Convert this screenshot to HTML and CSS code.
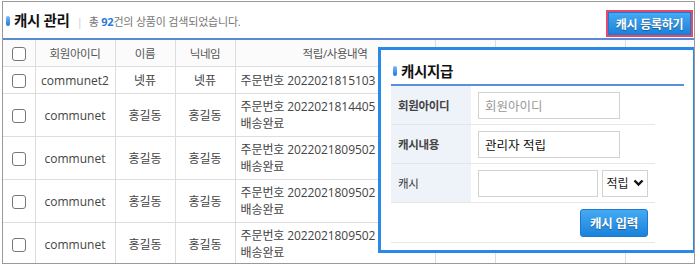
FILE: index.html
```html
<!DOCTYPE html>
<html lang="ko">
<head>
    <meta charset="UTF-8">
    <title>캐시 관리</title>
    <link rel="stylesheet" href="styles.css">
</head>
<body>
    <div class="frame">
        <!-- 상단 타이틀 -->
        <div class="head">
            <div class="head-title">
                <span class="pill"></span>
                <h2>캐시 관리</h2>
                <span class="bar">|</span>
                <span class="count">총 <b>92</b>건의 상품이 검색되었습니다.</span>
            </div>
            <div class="btn-wrap">
                <button class="btn-blue">캐시 등록하기</button>
            </div>
        </div>

        <!-- 목록 -->
        <table class="list">
            <colgroup>
                <col style="width:32px">
                <col style="width:80px">
                <col style="width:60px">
                <col style="width:60px">
                <col style="width:200px">
                <col style="width:60px">
                <col style="width:130px">
                <col>
            </colgroup>
            <thead>
                <tr>
                    <th><span class="chk"></span></th>
                    <th>회원아이디</th>
                    <th>이름</th>
                    <th>닉네임</th>
                    <th>적립/사용내역</th>
                    <th>캐시</th>
                    <th>일시</th>
                    <th>관리</th>
                </tr>
            </thead>
            <tbody>
                <tr class="short">
                    <td><span class="chk"></span></td>
                    <td>communet2</td>
                    <td>넷퓨</td>
                    <td>넷퓨</td>
                    <td class="memo">주문번호 2022021815103</td>
                    <td>1,000</td>
                    <td>2022-02-18</td>
                    <td class="last">0</td>
                </tr>
                <tr>
                    <td><span class="chk"></span></td>
                    <td>communet</td>
                    <td>홍길동</td>
                    <td>홍길동</td>
                    <td class="memo">주문번호 2022021814405<br>배송완료</td>
                    <td></td><td></td><td></td>
                </tr>
                <tr>
                    <td><span class="chk"></span></td>
                    <td>communet</td>
                    <td>홍길동</td>
                    <td>홍길동</td>
                    <td class="memo">주문번호 2022021809502<br>배송완료</td>
                    <td></td><td></td><td></td>
                </tr>
                <tr>
                    <td><span class="chk"></span></td>
                    <td>communet</td>
                    <td>홍길동</td>
                    <td>홍길동</td>
                    <td class="memo">주문번호 2022021809502<br>배송완료</td>
                    <td></td><td></td><td></td>
                </tr>
                <tr>
                    <td><span class="chk"></span></td>
                    <td>communet</td>
                    <td>홍길동</td>
                    <td>홍길동</td>
                    <td class="memo">주문번호 2022021809502<br>배송완료</td>
                    <td></td><td></td><td></td>
                </tr>
            </tbody>
        </table>

        <!-- 캐시지급 팝업 -->
        <div class="modal">
            <div class="modal-title">
                <span class="pill"></span>
                <h3>캐시지급</h3>
            </div>
            <table class="form">
                <tr>
                    <th>회원아이디</th>
                    <td><input type="text" class="inp" placeholder="회원아이디"></td>
                </tr>
                <tr>
                    <th>캐시내용</th>
                    <td><input type="text" class="inp" value="관리자 적립"></td>
                </tr>
                <tr>
                    <th class="light">캐시</th>
                    <td>
                        <div class="cash-row">
                            <input type="text" class="inp inp-short">
                            <div class="sel">적립
                                <svg width="11" height="8" viewBox="0 0 11 8"><path d="M1.5 1.5 L5.5 5.5 L9.5 1.5" fill="none" stroke="#111" stroke-width="2.4"/></svg>
                            </div>
                        </div>
                    </td>
                </tr>
                <tr class="act">
                    <td colspan="2"><button class="btn-blue btn-submit">캐시 입력</button></td>
                </tr>
            </table>
        </div>
    </div>
</body>
</html>
```

FILE: styles.css
```css
body {
    margin: 0;
    font-family: "Open Sans", "Noto Sans CJK KR", sans-serif;
    color: #444;
    background: #fff;
}

.frame {
    position: relative;
    margin: 1px 1px 0 2px;
    height: 261px;
    border: 1px solid #9a9a9a;
    overflow: hidden;
}

/* 상단 타이틀 */
.head {
    display: flex;
    justify-content: space-between;
    align-items: flex-start;
    height: 36px;
}

.head-title {
    display: flex;
    align-items: center;
    padding: 11px 0 0 3px;
}

.pill {
    display: inline-block;
    width: 4px;
    height: 10px;
    border-radius: 2px;
    background: linear-gradient(#7fb9f5, #1f78da);
    margin-right: 4px;
}

.head-title h2 {
    margin: 0;
    font-size: 14.5px;
    font-weight: bold;
    color: #111;
    letter-spacing: -0.3px;
    line-height: 16px;
}

.bar {
    color: #ccc;
    font-size: 11px;
    margin: 0 6px 0 7px;
}

.count {
    font-size: 11px;
    color: #777;
    letter-spacing: -0.2px;
}

.count b {
    color: #2a7ad5;
}

.btn-wrap {
    margin: 8px 1px 0 0;
    border: 2px solid #e4486c;
}

.btn-blue {
    display: block;
    border: 1px solid #1d78cf;
    background: linear-gradient(#45aaf2, #1a82dc);
    color: #fff;
    font-family: "Noto Sans CJK KR", sans-serif;
    font-weight: bold;
    font-size: 12px;
    text-shadow: 0 1px 1px rgba(0, 0, 0, 0.35);
    letter-spacing: -0.3px;
    padding: 0;
    cursor: pointer;
}

.btn-wrap .btn-blue {
    width: 83px;
    height: 23px;
}

/* 목록 */
.list {
    width: 100%;
    table-layout: fixed;
    border-collapse: collapse;
    border-top: 2px solid #5b8bd6;
    font-size: 12px;
}

.list th,
.list td {
    border: 1px solid #ddd;
    text-align: center;
    padding: 0;
    white-space: nowrap;
    overflow: hidden;
}

.list tr > :first-child {
    border-left: none;
}

.list tr > :last-child {
    border-right: none;
}

.list th {
    height: 26px;
    background: #fbfbfb;
    font-weight: normal;
    font-size: 11.5px;
    color: #555;
    letter-spacing: -0.4px;
}

.list td {
    height: 42px;
    color: #444;
}

.list .short td {
    height: 26px;
}

.list td.memo {
    text-align: left;
    padding-left: 5px;
    line-height: 17px;
    letter-spacing: -0.1px;
}

.list td.last {
    text-align: right;
    padding-right: 13px;
}

.chk {
    display: inline-block;
    width: 12px;
    height: 12px;
    border: 1px solid #777;
    border-radius: 3px;
    vertical-align: middle;
    background: #fff;
}

/* 팝업 */
.modal {
    position: absolute;
    left: 375px;
    top: 45px;
    width: 293px;
    height: 200px;
    border: 3px solid #2a88e6;
    background: #fff;
    padding: 0 9px 0 10px;
}

.modal::after {
    content: "";
    position: absolute;
    left: 100%;
    top: -6px;
    width: 22px;
    height: 212px;
    margin-left: 3px;
    background: linear-gradient(to right, rgba(0, 0, 0, 0.28), rgba(0, 0, 0, 0.05));
    clip-path: polygon(0 0, 100% 0, 25% 100%, 0 100%);
}

.modal-title {
    display: flex;
    align-items: center;
    height: 34px;
    padding-left: 2px;
    border-bottom: 2px solid #5b8fde;
}

.modal-title .pill {
    margin-top: 7px;
}

.modal-title h3 {
    margin: 6px 0 0;
    font-size: 14.5px;
    color: #111;
    letter-spacing: -0.3px;
}

.form {
    width: 264px;
    border-collapse: collapse;
    font-size: 12px;
}

.form th,
.form td {
    border-bottom: 1px solid #e6e6e6;
    padding: 0;
    height: 38px;
}

.form th {
    width: 73px;
    background: #eef3f9;
    text-align: left;
    padding-left: 7px;
    font-weight: bold;
    color: #444;
    font-size: 11.5px;
    letter-spacing: -0.3px;
}

.form th.light {
    font-weight: normal;
    color: #333;
}

.form td {
    padding-left: 7px;
}

.inp {
    box-sizing: border-box;
    width: 142px;
    height: 27px;
    border: 1px solid #d2d2d2;
    padding: 0 6px;
    font-family: "Noto Sans CJK KR", sans-serif;
    font-size: 12.5px;
    color: #111;
    display: block;
}

.inp::placeholder {
    color: #999;
}

.cash-row {
    display: flex;
    gap: 4px;
}

.inp-short {
    width: 120px;
}

.sel {
    box-sizing: border-box;
    width: 46px;
    height: 27px;
    border: 1px solid #d2d2d2;
    display: flex;
    align-items: center;
    justify-content: center;
    gap: 4px;
    color: #222;
    font-size: 12px;
}

.form tr.act td {
    height: 39px;
    text-align: right;
    padding-right: 7px;
}

.btn-submit {
    display: inline-block;
    width: 68px;
    height: 28px;
    border-radius: 3px;
    font-size: 12.5px;
    vertical-align: middle;
}
```
